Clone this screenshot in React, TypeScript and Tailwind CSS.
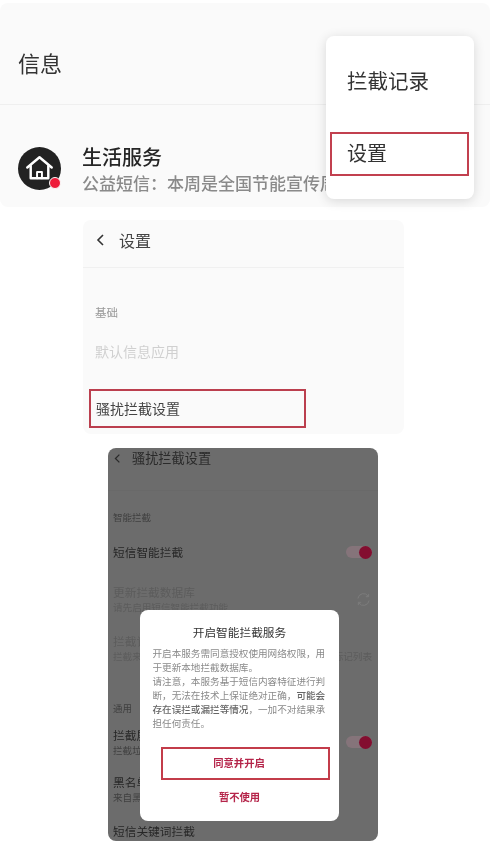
const font = "font-['Noto_Sans_CJK_SC','Noto_Sans',sans-serif]";

const Chevron = ({ className }: { className: string }) => (
  <svg viewBox="0 0 10 14" fill="none" stroke="currentColor" strokeWidth="1.6" className={className}>
    <path d="M8 2 L3 7 L8 12" />
  </svg>
);

const HomeIcon = () => (
  <svg viewBox="0 0 44 44" className="w-[43px] h-[43px]" fill="none" stroke="#fff" strokeWidth="2.5" strokeLinejoin="round" strokeLinecap="round">
    <circle cx="22" cy="22" r="22" fill="#222" stroke="none" />
    <path d="M9.5 21 L22 10.5 L34.5 21" />
    <path d="M13 19.5 V32 H31 V19.5" />
    <path d="M19.5 32 V25.5 H24.5 V32" strokeWidth="2" />
  </svg>
);

const Toggle = () => (
  <div className="relative w-[26px] h-[12px] rounded-full bg-[#85747a]">
    <div className="absolute right-0 top-[-0.5px] w-[13px] h-[13px] rounded-full bg-[#830e30]" />
  </div>
);

const MessagesPanel = () => (
  <section className="relative mt-[3px] w-[490px] h-[204px] rounded-lg bg-[#fafafa]">
    <div className="h-[102px] flex items-center pl-[18px] pt-[16px] border-b border-[#efefef]">
      <span className="text-[22px] leading-none text-[#333]">信息</span>
    </div>
    <div className="flex items-center gap-[21px] pl-[18px] pt-[39px]">
      <div className="relative shrink-0 mb-[3px]">
        <HomeIcon />
        <div className="absolute right-[0px] bottom-[1px] w-[12px] h-[12px] rounded-full bg-[#ee1c3a] border border-[#fafafa]" />
      </div>
      <div className="flex flex-col">
        <span className="text-[20px] leading-[26px] font-medium text-[#262626] whitespace-nowrap">生活服务</span>
        <span className="text-[17px] leading-[26px] font-medium text-[#8a8a8a] whitespace-nowrap">公益短信：本周是全国节能宣传周</span>
      </div>
    </div>
    {/* popup menu */}
    <div className="absolute left-[326px] top-[33px] w-[148px] h-[163px] rounded-lg bg-white shadow-[0_2px_12px_rgba(0,0,0,0.14)] flex flex-col pl-[4px]">
      <div className="h-[96px] flex items-center pl-[17px] pb-[8px]">
        <span className="text-[20.5px] text-[#333]">拦截记录</span>
      </div>
      <div className="w-[139px] h-[44px] border-2 border-[#c2404f] flex items-center pl-[15px] pb-[2px]">
        <span className="text-[20px] text-[#333]">设置</span>
      </div>
    </div>
  </section>
);

const SettingsPanel = () => (
  <section className="mt-[13px] ml-[83px] w-[321px] h-[214px] rounded-lg bg-[#fafafa]">
    <div className="h-[48px] flex items-center gap-[14px] pl-[12px] pb-[8px] border-b border-[#f0f0f0]">
      <Chevron className="w-[10px] h-[14px] text-[#333]" />
      <span className="text-[16px] text-[#444]">设置</span>
    </div>
    <div className="flex flex-col pl-[12px] pt-[36px]">
      <span className="text-[11.5px] leading-[16px] text-[#999]">基础</span>
      <span className="mt-[19px] text-[14px] leading-[24px] text-[#d0d0d0]">默认信息应用</span>
    </div>
    <div className="mt-[26px] ml-[6px] w-[217px] h-[39px] border-2 border-[#bb3f4e] flex items-center pl-[5px]">
      <span className="text-[14px] text-[#444]">骚扰拦截设置</span>
    </div>
  </section>
);

const Row = ({ title, sub, titleColor, subColor, right, h }: { title: string; sub?: string; titleColor: string; subColor?: string; right?: React.ReactNode; h: string }) => (
  <div className={`${h} flex items-center justify-between pr-[6px]`}>
    <div className="flex flex-col">
      <span className={`text-[11.7px] leading-[16px] whitespace-nowrap ${titleColor}`}>{title}</span>
      {sub && <span className={`text-[9.6px] leading-[14px] whitespace-nowrap ${subColor}`}>{sub}</span>}
    </div>
    {right}
  </div>
);

const RefreshIcon = () => (
  <svg viewBox="0 0 16 16" fill="none" stroke="#7d7d7d" strokeWidth="1" className="w-[15px] h-[15px] mr-[1px]">
    <path d="M2 7 A6 6 0 0 1 13 4.5 M13.5 2 V5 H10.5" />
    <path d="M14 9 A6 6 0 0 1 3 11.5 M2.5 14 V11 H5.5" />
  </svg>
);

const InterceptPanel = () => (
  <section className="relative mt-[14px] ml-[108px] w-[270px] h-[393px] rounded-lg bg-[#6c6c6c] overflow-hidden pl-[5px]">
    <div className="h-[20px] flex items-center gap-[11px]">
      <Chevron className="w-[8px] h-[11px] text-[#2a2a2a]" />
      <span className="text-[13.2px] text-[#2a2a2a]">骚扰拦截设置</span>
    </div>
    <div className="mt-[22px] border-t border-[#696969] -ml-[5px]" />
    <div className="mt-[19px] h-[14px] flex items-center text-[9.5px] text-[#3f3f3f]">智能拦截</div>
    <Row h="h-[50px] mt-[3px]" title="短信智能拦截" titleColor="text-[#262626]" right={<Toggle />} />
    <Row h="h-[34px] mt-[5px]" title="更新拦截数据库" sub="请先启用短信智能拦截功能" titleColor="text-[#5c5c5c]" subColor="text-[#5c5c5c]" right={<RefreshIcon />} />
    <Row h="h-[34px] mt-[15px]" title="拦截记录" sub="拦截来自陌生号码的垃圾短信，并将其归类显示在已标记列表" titleColor="text-[#5c5c5c]" subColor="text-[#5c5c5c]" />
    <div className="mt-[36px] h-[14px] flex items-center text-[9.5px] text-[#3f3f3f]">通用</div>
    <Row h="h-[34px] mt-[10px]" title="拦截屏蔽" sub="拦截垃圾信息" titleColor="text-[#262626]" subColor="text-[#3f3f3f]" right={<Toggle />} />
    <Row h="h-[34px] mt-[13px]" title="黑名单" sub="来自黑名单" titleColor="text-[#262626]" subColor="text-[#3f3f3f]" />
    <div className="mt-[16px] h-[18px] flex items-center text-[11.7px] text-[#262626]">短信关键词拦截</div>

    {/* dialog */}
    <div className="absolute left-[32px] top-[162px] w-[199px] h-[211px] rounded-lg bg-white flex flex-col items-center">
      <h2 className="mt-[14px] text-[11.7px] leading-[16px] font-normal text-[#333]">开启智能拦截服务</h2>
      <p className="mt-[6px] w-[174px] text-[9.6px] leading-[14.1px] text-[#8a8a8a]">
        开启本服务需同意授权使用网络权限，用于更新本地拦截数据库。<br />
        请注意，本服务基于短信内容特征进行判断，无法在技术上保证绝对正确，<b className="font-medium text-[#666]">可能会存在误拦或漏拦等情况</b>，一加不对结果承担任何责任。
      </p>
      <button className="mt-[16px] self-start ml-[21px] w-[169px] h-[33px] pr-[13px] border-2 border-[#c33c4a] text-[10.3px] font-bold text-[#b5254a]">同意并开启</button>
      <button className="mt-[9px] text-[10.3px] leading-[16px] font-bold text-[#b5254a]">暂不使用</button>
    </div>
  </section>
);

export default function App() {
  return (
    <div className={`${font} w-[494px] h-[847px] bg-white overflow-hidden flex flex-col blur-[0.4px]`}>
      <MessagesPanel />
      <SettingsPanel />
      <InterceptPanel />
    </div>
  );
}
